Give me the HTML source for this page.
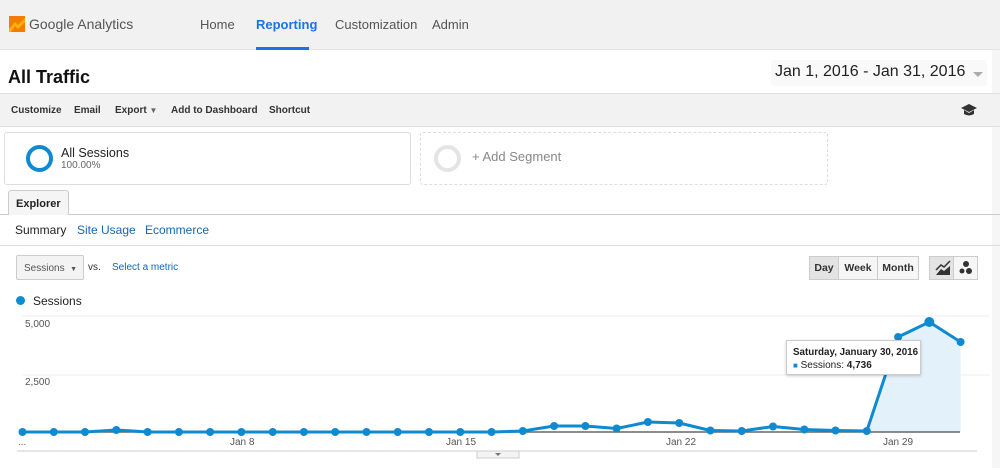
<!DOCTYPE html>
<html><head><meta charset="utf-8"><style>
*{margin:0;padding:0;box-sizing:border-box}
body{width:1000px;height:468px;overflow:hidden;background:#fff;font-family:"Liberation Sans",Arial,sans-serif;position:relative;color:#222}
.abs{position:absolute}
.top{left:0;top:0;width:1000px;height:50px;background:#f1f1f1;border-bottom:1px solid #e4e4e4}
.nav{top:17px;font-size:13px;color:#555}
.tb{left:0;top:93px;width:1000px;height:34px;background:#f2f2f2;border-top:1px solid #e0e0e0;border-bottom:1px solid #e0e0e0}
.tb span{position:absolute;top:11px;font-size:10px;font-weight:bold;color:#333;white-space:nowrap}
.btn{border:1px solid #ccc;background:#f6f6f6;font-size:10.5px;font-weight:bold;color:#333;text-align:center;line-height:22px}
</style></head><body>
<div class="abs" style="left:992px;top:50px;width:8px;height:418px;background:#f6f6f6"></div>
<div class="abs top"></div>
<svg class="abs" style="left:9px;top:16px" width="16" height="16" viewBox="0 0 16 16"><rect width="16" height="16" fill="#f57c00"/><path d="M0 13 L6 6 L9 9 L16 2 L16 6 L9 13 L6 10 L2 16 L0 16Z" fill="#ffb300"/></svg>
<div class="abs" style="left:29px;top:16px;font-size:14px;color:#555">Google Analytics</div>
<div class="abs nav" style="left:200px">Home</div>
<div class="abs nav" style="left:256px;color:#1a73e8;font-weight:bold">Reporting</div>
<div class="abs" style="left:256px;top:47px;width:53px;height:3px;background:#1a73e8"></div>
<div class="abs nav" style="left:335px">Customization</div>
<div class="abs nav" style="left:432px">Admin</div>
<div class="abs" style="left:8px;top:67px;font-size:18px;font-weight:bold;color:#111">All Traffic</div>
<div class="abs" style="left:771px;top:60px;width:216px;height:26px;background:#f9f9f9;border-radius:3px"></div>
<div class="abs" style="left:775px;top:63px;font-size:16px;color:#222">Jan 1, 2016 - Jan 31, 2016</div>
<div class="abs" style="left:973px;top:72px;border:5px solid transparent;border-top:5px solid #aaa"></div>
<div class="abs tb"><span style="left:11px">Customize</span><span style="left:74px">Email</span><span style="left:115px">Export <small style="font-size:8px;color:#666">▼</small></span><span style="left:171px">Add to Dashboard</span><span style="left:269px">Shortcut</span>
<svg style="position:absolute;left:960px;top:9px" width="18" height="14" viewBox="0 0 18 14"><path d="M1 5 L9 1 L17 5 L9 9Z M4 7 L4 11 Q9 14 14 11 L14 7 L9 10Z" fill="#333"/></svg></div>
<div class="abs" style="left:4px;top:132px;width:407px;height:53px;border:1px solid #ddd;border-radius:3px"></div>
<div class="abs" style="left:26px;top:145px;width:27px;height:27px;border:4px solid #0f8ad0;border-radius:50%"></div>
<div class="abs" style="left:61px;top:146px;font-size:12.5px">All Sessions</div>
<div class="abs" style="left:61px;top:160px;font-size:10px;color:#666">100.00%</div>
<div class="abs" style="left:420px;top:132px;width:408px;height:53px;border:1px dashed #ddd;border-radius:3px"></div>
<div class="abs" style="left:434px;top:145px;width:27px;height:27px;border:4px solid #e4e4e4;border-radius:50%"></div>
<div class="abs" style="left:472px;top:149px;font-size:13px;color:#888">+ Add Segment</div>
<div class="abs" style="left:0;top:214px;width:1000px;border-top:1px solid #ccc"></div>
<div class="abs" style="left:8px;top:190px;width:61px;height:25px;background:#f5f5f5;border:1px solid #ccc;border-bottom:none;border-radius:3px 3px 0 0;font-size:11px;font-weight:bold;padding:7px 0 0 7px">Explorer</div>
<div class="abs" style="left:15px;top:223px;font-size:12px">Summary</div>
<div class="abs" style="left:77px;top:223px;font-size:12px;color:#1565b4">Site Usage</div>
<div class="abs" style="left:145px;top:223px;font-size:12px;color:#1565b4">Ecommerce</div>
<div class="abs" style="left:0;top:245px;width:1000px;border-top:1px solid #ddd"></div>
<div class="abs" style="left:16px;top:255px;width:68px;height:25px;border:1px solid #ccc;background:#f3f3f3;border-radius:2px;font-size:10px;color:#555;padding:7px 0 0 7px;white-space:nowrap">Sessions &nbsp;<small style="font-size:7px">▼</small></div>
<div class="abs" style="left:88px;top:262px;font-size:10px;color:#333">vs.</div>
<div class="abs" style="left:112px;top:262px;font-size:10px;color:#1565b4">Select a metric</div>
<div class="abs btn" style="left:809px;top:256px;width:30px;height:24px;background:#e3e3e3">Day</div>
<div class="abs btn" style="left:838px;top:256px;width:40px;height:24px">Week</div>
<div class="abs btn" style="left:877px;top:256px;width:42px;height:24px">Month</div>
<div class="abs btn" style="left:929px;top:256px;width:25px;height:24px;background:#e3e3e3"></div>
<div class="abs btn" style="left:953px;top:256px;width:25px;height:24px"></div>
<svg class="abs" style="left:933px;top:259px" width="45" height="18"><path d="M3 11 L8 6 L11 8 L17 2" fill="none" stroke="#333" stroke-width="1.5"/><path d="M3 16 L8 10 L11 12 L17 7 L17 16 Z" fill="#333"/><circle cx="33" cy="5" r="3" fill="#333"/><circle cx="29" cy="12" r="2.5" fill="#333"/><circle cx="36" cy="12" r="3" fill="#333"/></svg>
<div class="abs" style="left:16px;top:296px;width:9px;height:9px;border-radius:50%;background:#0f8ad0"></div>
<div class="abs" style="left:33px;top:294px;font-size:12px">Sessions</div>
<svg class="abs" style="left:0;top:0" width="1000" height="468">
<line x1="22" y1="316" x2="990" y2="316" stroke="#eee"/>
<line x1="22" y1="375" x2="990" y2="375" stroke="#eee"/>
<line x1="17" y1="451" x2="977" y2="451" stroke="#ccc"/>
<text x="25" y="327" font-size="10" fill="#555" font-family="Liberation Sans">5,000</text>
<text x="25" y="385" font-size="10" fill="#555" font-family="Liberation Sans">2,500</text>
<text x="18" y="445" font-size="10" fill="#666" font-family="Liberation Sans">...</text>
<text x="230" y="445" font-size="10" fill="#555" font-family="Liberation Sans">Jan 8</text>
<text x="446" y="445" font-size="10" fill="#555" font-family="Liberation Sans">Jan 15</text>
<text x="666" y="445" font-size="10" fill="#555" font-family="Liberation Sans">Jan 22</text>
<text x="883" y="445" font-size="10" fill="#555" font-family="Liberation Sans">Jan 29</text>
<path d="M866.8 431 L898.1 337 L929.3 322 L960.6 342 L960.6 432 L866.8 432Z" fill="#e3f1fa"/>
<line x1="22" y1="432" x2="960" y2="432" stroke="#666" stroke-width="1.5"/>
<polyline fill="none" stroke="#0f8ad0" stroke-width="3" stroke-linejoin="round" points="22.5,432 53.8,432 85,432 116.3,430 147.6,432 178.9,432 210.1,432 241.4,432 272.7,432 303.9,432 335.2,432 366.5,432 397.7,432 429,432 460.3,432 491.6,432 522.8,431 554.1,426 585.4,426 616.6,428.5 647.9,422 679.2,423 710.4,430.5 741.7,431 773,426.5 804.3,429.5 835.5,430.5 866.8,431 898.1,337 929.3,322 960.6,342"/>
<g fill="#0f8ad0">
<circle cx="22.5" cy="432" r="4"/><circle cx="53.8" cy="432" r="4"/><circle cx="85" cy="432" r="4"/><circle cx="116.3" cy="430" r="4"/><circle cx="147.6" cy="432" r="4"/><circle cx="178.9" cy="432" r="4"/><circle cx="210.1" cy="432" r="4"/><circle cx="241.4" cy="432" r="4"/><circle cx="272.7" cy="432" r="4"/><circle cx="303.9" cy="432" r="4"/><circle cx="335.2" cy="432" r="4"/><circle cx="366.5" cy="432" r="4"/><circle cx="397.7" cy="432" r="4"/><circle cx="429" cy="432" r="4"/><circle cx="460.3" cy="432" r="4"/><circle cx="491.6" cy="432" r="4"/><circle cx="522.8" cy="431" r="4"/><circle cx="554.1" cy="426" r="4"/><circle cx="585.4" cy="426" r="4"/><circle cx="616.6" cy="428.5" r="4"/><circle cx="647.9" cy="422" r="4"/><circle cx="679.2" cy="423" r="4"/><circle cx="710.4" cy="430.5" r="4"/><circle cx="741.7" cy="431" r="4"/><circle cx="773" cy="426.5" r="4"/><circle cx="804.3" cy="429.5" r="4"/><circle cx="835.5" cy="430.5" r="4"/><circle cx="866.8" cy="431" r="4"/><circle cx="898.1" cy="337" r="4"/><circle cx="929.3" cy="322" r="5"/><circle cx="960.6" cy="342" r="4"/>
</g>
<rect x="477" y="451" width="42" height="7" fill="#f3f3f3" stroke="#ccc"/>
<path d="M495 453 L501 453 L498 456Z" fill="#777"/>
</svg>
<div class="abs" style="left:786px;top:340px;width:135px;height:35px;background:#fff;border:1px solid #ccc;box-shadow:0 1px 3px rgba(0,0,0,.2);padding:5px 0 0 6px;font-size:10px;line-height:13px;white-space:nowrap">
<b style="font-size:9.8px">Saturday, January 30, 2016</b><br><span style="color:#0f8ad0;font-size:8px">■</span> Sessions: <b>4,736</b></div>
</body></html>
